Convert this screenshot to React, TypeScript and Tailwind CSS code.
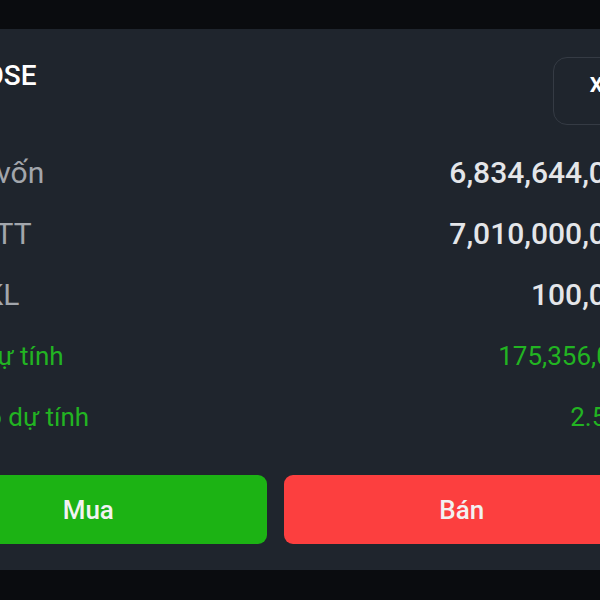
import React from "react";

const rows = [
  { label: "Giá trị vốn", value: "6,834,644,000", green: false },
  { label: "Giá trị TT", value: "7,010,000,000", green: false },
  { label: "Tổng KL", value: "100,000", green: false },
  { label: "Lãi/lỗ dự tính", value: "175,356,000", green: true },
  { label: "% Lãi/lỗ dự tính", value: "2.57%", green: true },
];

export default function App() {
  return (
    <div
      className="w-[600px] h-[600px] overflow-hidden bg-[#0a0c0f] pt-[29px]"
      style={{ fontFamily: "Roboto, 'Noto Sans', sans-serif" }}
    >
      <div className="ml-[-120px] w-[790px] h-[541px] bg-[#1f252d] px-[30px] pt-[28px] pb-[26px] flex flex-col">
        <div className="flex items-start justify-between h-[68px]">
          <div className="mt-[5px] text-[28px] leading-none font-medium text-white">
            Sàn HOSE
          </div>
          <button className="w-[87px] h-[68px] rounded-[14px] border-[1.5px] border-[#353b44] flex items-center justify-center pb-[11px] text-[21px] font-bold text-white leading-none">
            X
          </button>
        </div>
        <div className="mt-[17px] flex flex-col">
          {rows.map((r) => (
            <div key={r.label} className="h-[61px] flex items-center justify-between">
              <span
                className={
                  r.green
                    ? "text-[26px] leading-none text-[#22b422]"
                    : "text-[30px] leading-none text-[#a2a6ac]"
                }
              >
                {r.label}
              </span>
              <span
                className={
                  r.green
                    ? "text-[26px] leading-none text-[#22b422]"
                    : "text-[30px] leading-none font-medium text-[#e4e6e9]"
                }
              >
                {r.value}
              </span>
            </div>
          ))}
        </div>
        <div className="mt-[28px] flex gap-[17px]">
          <button className="flex-1 h-[69px] rounded-[9px] bg-[#1cb314] text-[26px] font-medium text-[#f2f2f2] leading-none">
            Mua
          </button>
          <button className="flex-1 h-[69px] rounded-[9px] bg-[#fc3f3f] text-[26px] font-medium text-[#f2f2f2] leading-none">
            Bán
          </button>
        </div>
      </div>
    </div>
  );
}
